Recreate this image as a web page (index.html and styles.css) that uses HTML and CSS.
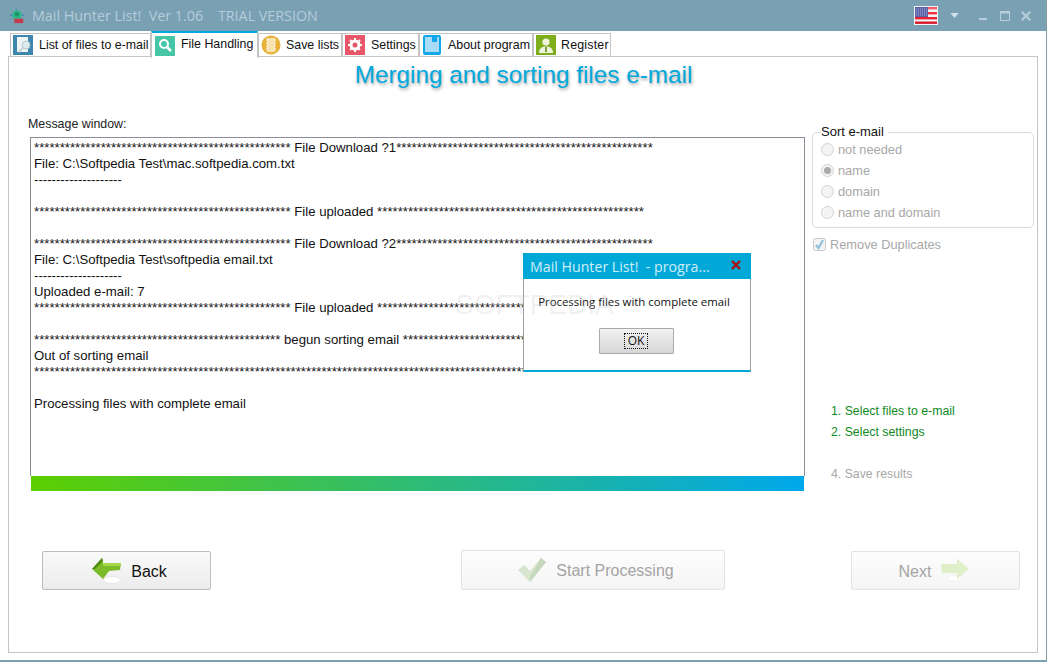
FILE: index.html
```html
<!DOCTYPE html>
<html lang="en">
<head>
<meta charset="utf-8">
<title>Mail Hunter List!</title>
<link rel="stylesheet" href="styles.css">
</head>
<body>
<div class="window">
  <header class="titlebar">
    <svg class="app-icon" viewBox="0 0 18 18"><path d="M1 8h16M8 1v14" stroke="#3b6fb0" stroke-width="1" fill="none"/><circle cx="9" cy="8" r="5.5" fill="#2fb98a"/><circle cx="9" cy="7" r="2.5" fill="#1e8f68"/><rect x="6" y="12" width="10" height="5" fill="#c23a4c"/></svg>
    <span class="app-title">Mail Hunter List!&nbsp; Ver 1.06 &nbsp; &nbsp;TRIAL VERSION</span>
    <svg class="flag" viewBox="0 0 24 19"><rect width="24" height="19" fill="#f2f4f6"/><rect x="1" y="1" width="22" height="2.4" fill="#f0606c"/><rect x="1" y="6" width="22" height="2.4" fill="#ee3040"/><rect x="1" y="11" width="22" height="2.4" fill="#e82030"/><rect x="1" y="15.5" width="22" height="2.4" fill="#d81828"/><rect x="1" y="1" width="13" height="10" fill="#5a60a8"/><path d="M2 3h11M2 5h11M2 7h11M2 9h11" stroke="#a8acd4" stroke-width="1" stroke-dasharray="1 1"/></svg>
    <svg class="caret" viewBox="0 0 10 6"><path d="M0 0h10L5 6z" fill="#cfe0e8"/></svg>
    <svg class="winbtn min" viewBox="0 0 10 10"><rect x="0" y="7" width="8" height="2" fill="#b9d0db"/></svg>
    <svg class="winbtn max" viewBox="0 0 10 10"><path d="M.5.5h9v9h-9z" fill="none" stroke="#b9d0db"/><rect width="10" height="2.5" fill="#b9d0db"/></svg>
    <svg class="winbtn close" viewBox="0 0 10 10"><path d="M.7.7l8.6 8.6M9.3.7L.7 9.3" stroke="#b9d0db" stroke-width="2"/></svg>
  </header>

  <nav class="tabs">
    <div class="tab t1">
      <svg class="tab-icon" viewBox="0 0 20 20"><rect width="20" height="20" fill="#3d86ad"/><path d="M4 2h11v15H4z" fill="#eef4f4"/><circle cx="13" cy="10" r="4" fill="#dce9ee" stroke="#b8c8cc"/><path d="M10 13l-4 4" stroke="#c7d2d2" stroke-width="2"/></svg>
      <span>List of files to e-mail</span>
    </div>
    <div class="tab t2 active">
      <svg class="tab-icon" viewBox="0 0 20 20"><rect width="20" height="20" fill="#46c6a6"/><circle cx="9" cy="8" r="4" fill="none" stroke="#fff" stroke-width="2"/><path d="M12 11l4 4" stroke="#fff" stroke-width="2.5"/></svg>
      <span>File Handling</span>
    </div>
    <div class="tab t3">
      <svg class="tab-icon" viewBox="0 0 20 20"><circle cx="10" cy="10" r="9.5" fill="#e8b13a"/><rect x="6" y="3" width="8" height="14" fill="#f6e3b0"/><path d="M5 5h2M5 8h2M5 11h2M5 14h2M13 5h2M13 8h2M13 11h2M13 14h2" stroke="#fff" stroke-width="1"/></svg>
      <span>Save lists</span>
    </div>
    <div class="tab t4">
      <svg class="tab-icon" viewBox="0 0 20 20"><rect width="20" height="20" fill="#e8566a"/><circle cx="10" cy="10" r="4" fill="none" stroke="#fff" stroke-width="3"/><path d="M10 3v14M3 10h14M5 5l10 10M15 5L5 15" stroke="#fff" stroke-width="2" stroke-dasharray="2 10"/></svg>
      <span>Settings</span>
    </div>
    <div class="tab t5">
      <svg class="tab-icon" viewBox="0 0 20 20"><rect x="1" y="0" width="18" height="20" rx="2" fill="#12a6ea"/><rect x="3" y="2" width="14" height="15" fill="#a8dcf6"/><rect x="10" y="2" width="5" height="5" fill="#12a6ea"/></svg>
      <span>About program</span>
    </div>
    <div class="tab t6">
      <svg class="tab-icon" viewBox="0 0 20 20"><rect width="20" height="20" fill="#7fae1c"/><circle cx="10" cy="7" r="3.6" fill="#eef4dc"/><path d="M3 18c0-5 3-6.500 7-6.500s7 1.500 7 6.500z" fill="#eef4dc"/><path d="M10 12v5" stroke="#5d8a10" stroke-width="1.600"/></svg>
      <span>Register</span>
    </div>
  </nav>

  <main class="panel">
    <h1 class="heading">Merging and sorting files e-mail</h1>
    <div class="content">
      <section class="messages">
        <div class="msg-label">Message window:</div>
        <div class="log">
          <div>************************************************** File Download ?1**************************************************</div>
          <div>File: C:\Softpedia Test\mac.softpedia.com.txt</div>
          <div>--------------------</div>
          <div>&nbsp;</div>
          <div>************************************************** File uploaded ****************************************************</div>
          <div>&nbsp;</div>
          <div>************************************************** File Download ?2**************************************************</div>
          <div>File: C:\Softpedia Test\softpedia email.txt</div>
          <div>--------------------</div>
          <div>Uploaded e-mail: 7</div>
          <div>************************************************** File uploaded ****************************************************</div>
          <div>&nbsp;</div>
          <div>************************************************ begun sorting email **************************************************</div>
          <div>Out of sorting email</div>
          <div>**************************************************************************************************************************************</div>
          <div>&nbsp;</div>
          <div>Processing files with complete email</div>
        </div>
        <div class="progress"></div>
      </section>
      <aside class="side">
        <fieldset class="sort">
          <legend>Sort e-mail</legend>
          <div class="radio"><i class="dot"></i>not needed</div>
          <div class="radio"><i class="dot on"></i>name</div>
          <div class="radio"><i class="dot"></i>domain</div>
          <div class="radio"><i class="dot"></i>name and domain</div>
        </fieldset>
        <div class="check">
          <svg class="checkbox" viewBox="0 0 13 13"><rect x=".5" y=".5" width="12" height="12" rx="2" fill="#f4f4f4" stroke="#c8c8c8"/><path d="M3 7l2.500 3L10 2" fill="none" stroke="#8fc0dc" stroke-width="2.200"/></svg>
          Remove Duplicates
        </div>
        <ol class="steps">
          <li class="done">1. Select files to e-mail</li>
          <li class="done">2. Select settings</li>
          <li></li>
          <li>4. Save results</li>
        </ol>
      </aside>
    </div>
    <div class="actions">
      <div class="btn back">
        <svg class="btn-icon" viewBox="0 0 30 26"><ellipse cx="20" cy="22" rx="8.500" ry="3.500" fill="#fff" stroke="#e6e6e6"/><path d="M0 11L10 0l1 5h18l-1 7-11 1-6 8z" fill="#7dbb2a"/><path d="M0 11L10 0l1 3-8 8z" fill="#4f8a12"/><path d="M11 5h18l-.4 3H11z" fill="#a6d84e"/></svg>
        <span>Back</span>
      </div>
      <div class="btn start off">
        <svg class="btn-icon check-icon" viewBox="0 0 30 26"><path d="M1 13l6-5 6 6L24 1l5 4-16 20z" fill="#d6e6cf"/><path d="M24 1l5 4-16 20v-5z" fill="#c5d8bd"/></svg>
        <span>Start Processing</span>
      </div>
      <div class="btn next off">
        <span>Next</span>
        <svg class="btn-icon" viewBox="0 0 30 26"><ellipse cx="14" cy="20" rx="7" ry="3" fill="#fff" stroke="#f0f0f0"/><path d="M29 11L17 1v5H1l1 9h15v6z" fill="#dff0c8"/></svg>
      </div>
    </div>

    <div class="dialog">
      <div class="dlg-title"><span>Mail Hunter List!&nbsp; - progra...</span>
        <svg class="dlg-close" viewBox="0 0 10 10"><path d="M1 1l8 8M9 1L1 9" stroke="#a81010" stroke-width="2.400"/></svg>
      </div>
      <div class="dlg-body">
        <p class="dlg-text">Processing files with complete email</p>
        <div class="dlg-btn"><span>OK</span></div>
      </div>
    </div>
    <div class="watermark">SOFTPEDIA</div>
  </main>
</div>
</body>
</html>
```
FILE: styles.css
```css
* { box-sizing: border-box; }
html, body { margin: 0; padding: 0; }
body { width: 1047px; height: 662px; overflow: hidden; background: #fff; font-family: "Liberation Sans", Arial, sans-serif; font-size: 12.3px; color: #111; }
.window { width: 1047px; height: 662px; display: flex; flex-direction: column; background: #fff; border-right: 1px solid #8a9aa2; border-bottom: 2px solid #7aa0b4; }

.titlebar { height: 31px; flex: none; background: #7aa0b4; display: flex; align-items: center; padding-left: 9px; }
.app-icon { width: 16px; height: 16px; margin-right: 7px; flex: none; }
.app-title { font-family: "Open Sans", sans-serif; font-size: 14.3px; color: #b5cdd9; flex: 1; white-space: pre; }
.flag { width: 24px; height: 19px; flex: none; margin-right: 12px; }
.caret { width: 9px; height: 5px; flex: none; margin-right: 20px; }
.winbtn { width: 10px; height: 10px; flex: none; }
.min { margin-right: 11px; }
.max { margin-right: 11px; }
.close { margin-right: 15px; }

.tabs { height: 25px; flex: none; display: flex; align-items: flex-start; padding-left: 10px; position: relative; z-index: 2; }
.tab { height: 23px; margin-top: 2px; border: 1px solid #c4c4c4; border-bottom: 0; display: flex; align-items: center; padding: 0 2px; background: #fff; white-space: nowrap; font-size: 12.4px; }
.tab-icon { width: 20px; height: 20px; flex: none; margin-right: 6px; }
.t1 { width: 141px; }
.t2 { width: 107px; height: 27px; margin-top: 0; border-top: 2px solid #00a8dc; align-items: flex-start; padding: 3px 3px 0; }
.t2 span { margin-top: 1px; }
.t3 { width: 84px; }
.t3 .tab-icon { margin-right: 5px; }
.t4 { width: 77px; }
.t5 { width: 114px; }
.t6 { width: 78px; }
.t6 .tab-icon { margin-right: 5px; }
.t6 span { letter-spacing: .2px; }

.panel { position: relative; height: 597px; flex: none; margin: 0 8px; width: 1030px; border: 1px solid #c4c4c4; display: flex; flex-direction: column; }
.heading { margin: 0; height: 36px; flex: none; text-align: center; font-size: 24.3px; line-height: 36px; font-weight: 400; color: #00a8dc; text-shadow: 1px 2px 3px rgba(60, 60, 60, .45); padding-left: 1px; }
.content { display: flex; height: 398px; flex: none; padding-left: 19px; }
.messages { width: 777px; flex: none; padding-top: 23px; }
.msg-label { height: 21px; line-height: 16px; color: #222; font-size: 12.4px; }
.log { height: 339px; margin-left: 2px; border: 1px solid #8d8d99; border-bottom: 0; padding: 2px 3px 0; font-size: 13.2px; line-height: 16px; overflow: hidden; color: #111; }
.log div { height: 16px; white-space: nowrap; }
.progress { height: 15px; margin-left: 3px; width: 773px; background: linear-gradient(90deg, #5ccf00, #00a8ec); }

.side { flex: 1; padding-left: 7px; min-width: 0; color: #a8a8a8; }
.sort { margin: 32px 0 0; padding: 0 0 4px 8px; width: 222px; height: 103px; border: 1px solid #dcdcdc; border-radius: 5px; }
.sort legend { padding: 0 4px 0 0; color: #111; line-height: 14px; font-size: 13px; }
.radio { height: 21px; display: flex; align-items: center; font-size: 12.8px; }
.dot { width: 13px; height: 13px; flex: none; border: 1px solid #d2d2d2; border-radius: 50%; margin-right: 4px; background: #f4f4f4; position: relative; }
.dot.on::after { content: ""; position: absolute; left: 2px; top: 2px; width: 7px; height: 7px; border-radius: 50%; background: #aaa; }
.check { display: flex; align-items: center; margin: 8px 0 0 1px; height: 16px; font-size: 12.8px; }
.checkbox { width: 13px; height: 13px; margin-right: 4px; flex: none; }
.steps { list-style: none; margin: 149px 0 0 19px; padding: 0; }
.steps li { height: 21px; line-height: 21px; }
.steps .done { color: #0f8a1e; }

.actions { display: flex; align-items: flex-start; padding: 60px 17px 0 33px; }
.btn { height: 39px; width: 169px; border: 1px solid #bcbcbc; border-radius: 2px; background: linear-gradient(#fafafa, #ececec); display: flex; align-items: center; justify-content: center; font-size: 16px; color: #111; }
.btn-icon { width: 30px; height: 26px; flex: none; }
.back { margin-right: 250px; padding-left: 6px; }
.back .btn-icon { margin-right: 9px; }
.back span { margin-top: 2px; }
.off { border-color: #e2e2e2; background: linear-gradient(#fdfdfd, #f5f5f5); color: #a4a4a4; }
.start { width: 264px; height: 40px; margin-top: -1px; padding-left: 5px; }
.start span { margin-top: 2px; }
.start .btn-icon { margin-right: 9px; }
.next { margin-left: auto; padding-right: 2px; }
.next .btn-icon { margin-left: 9px; }
.next span { margin-top: 2px; }

.watermark { position: absolute; left: 446px; top: 232px; font-size: 28px; font-weight: 400; color: rgba(190, 190, 190, .22); pointer-events: none; }
.dialog { position: absolute; left: 514px; top: 196px; width: 228px; height: 119px; background: #fff; border-left: 1px solid #a0a0a0; border-right: 1px solid #a0a0a0; border-bottom: 2px solid #00a8d8; display: flex; flex-direction: column; }
.dlg-title { height: 26px; flex: none; margin: 0 -1px; background: #00a8d8; color: #cfeef8; font-family: "Open Sans", sans-serif; font-size: 14.2px; display: flex; align-items: center; justify-content: space-between; padding: 0 10px 0 7px; }
.dlg-close { width: 10px; height: 10px; margin-bottom: 2px; }
.dlg-body { flex: 1; display: flex; flex-direction: column; align-items: center; font-family: "Open Sans", sans-serif; font-size: 11.4px; color: #111; }
.dlg-text { margin: 14px 6px 0 0; line-height: 17px; white-space: nowrap; }
.dlg-btn { margin: 18px 2px 0 0; width: 75px; height: 26px; border: 1px solid #aaa; border-radius: 1px; background: linear-gradient(#f2f2f2, #d6d6d6); display: flex; align-items: center; justify-content: center; font-size: 12px; }
.dlg-btn span { border: 1px dotted #111; padding: 0 3px; line-height: 14px; }
```
